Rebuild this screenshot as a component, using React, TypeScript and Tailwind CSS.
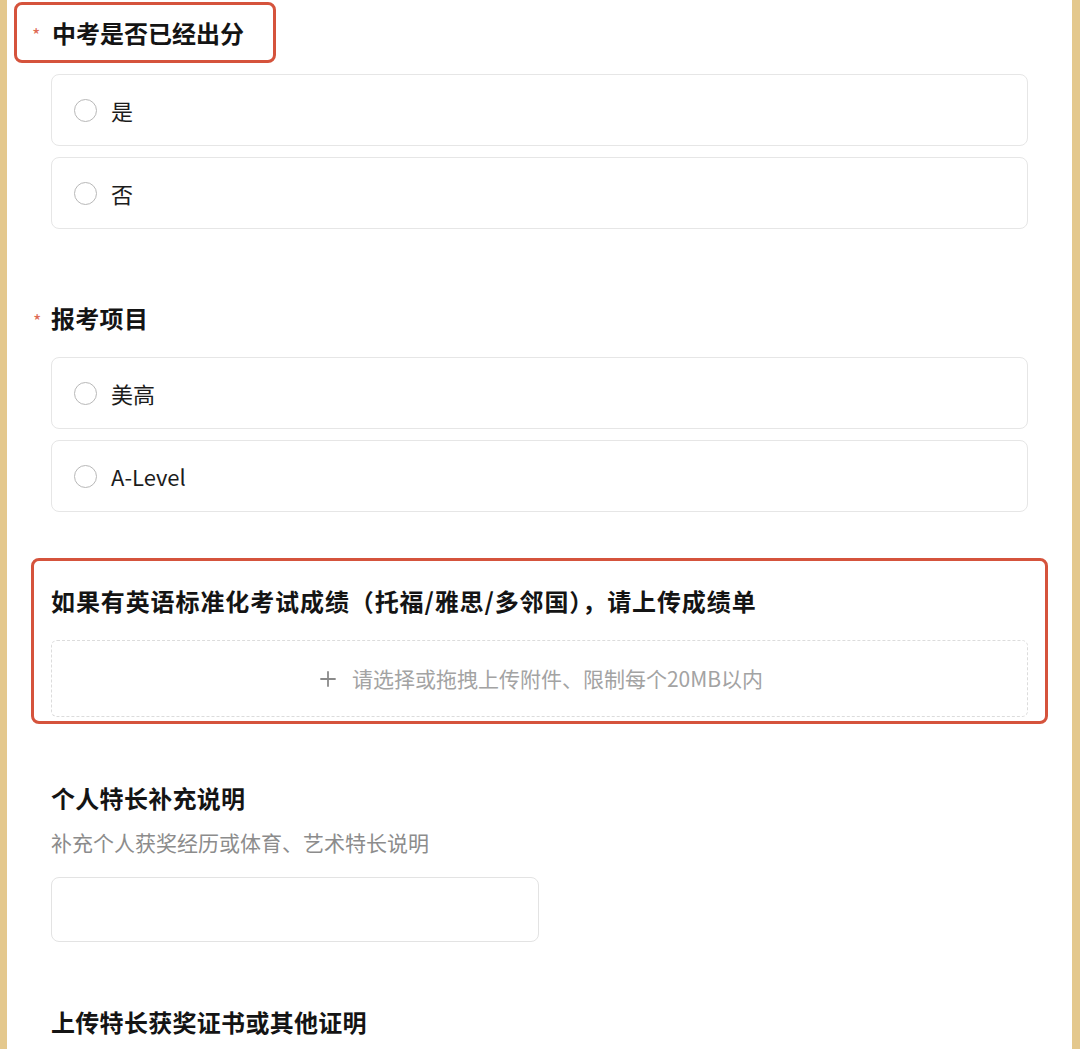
import { Plus } from "lucide-react";

const font = { fontFamily: '"Noto Sans CJK SC", "Noto Sans", sans-serif' };

function Option({ label }: { label: string }) {
  return (
    <div className="flex h-[72px] items-center rounded-[8px] border border-[#e6e6e6] bg-white pl-[22px]">
      <span className="h-[23px] w-[23px] rounded-full border-[1.5px] border-[#b8b8b8]" />
      <span className="ml-[14px] text-[22px] text-[#1c1c1c]">{label}</span>
    </div>
  );
}

function Title({ text, required }: { text: string; required?: boolean }) {
  return (
    <div className="-ml-[20px] flex h-[32px] items-center">
      <span className="w-[20px] pl-[2px] pt-[4px] text-[18px] text-[#de6b55]">
        {required ? "*" : ""}
      </span>
      <span className="text-[24px] font-bold leading-[32px] tracking-[0.3px] text-[#141414]">{text}</span>
    </div>
  );
}

export default function App() {
  return (
    <div
      style={font}
      className="h-[1049px] w-[1080px] overflow-hidden border-l-[7px] border-r-[8px] border-[#e4c88d] bg-white px-[44px]"
    >
      <div className="pt-[2px]">
        <div className="-ml-[37px] flex h-[61px] w-[262px] items-center rounded-[8px] border-[3px] border-[#d5533c] pl-[15px]">
          <span className="w-[20px] pt-[4px] text-[18px] text-[#de6b55]">*</span>
          <span className="text-[24px] font-bold leading-[32px] text-[#141414]">中考是否已经出分</span>
        </div>
      </div>

      <div className="mt-[11px] flex flex-col gap-[11px]">
        <Option label="是" />
        <Option label="否" />
      </div>

      <div className="mt-[73px]">
        <Title text="报考项目" required />
      </div>
      <div className="mt-[23px] flex flex-col gap-[11px]">
        <Option label="美高" />
        <Option label="A-Level" />
      </div>

      <div className="-mx-[20px] mt-[46px] rounded-[8px] border-[3px] border-[#d5533c] px-[17px] pb-[4px] pt-[24px]">
        <div className="text-[24px] font-bold leading-[32px] tracking-[0.9px] text-[#141414]">
          如果有英语标准化考试成绩（托福/雅思/多邻国），请上传成绩单
        </div>
        <div className="mt-[23px] flex h-[77px] items-center justify-center rounded-[6px] border border-dashed border-[#dcdcdc]">
          <Plus className="h-[24px] w-[24px] text-[#8a8a8a]" strokeWidth={1.8} />
          <span className="ml-[12px] text-[21px] text-[#a3a3a3]">请选择或拖拽上传附件、限制每个20MB以内</span>
        </div>
      </div>

      <div className="mt-[58px]">
        <Title text="个人特长补充说明" />
      </div>
      <div className="mt-[14px] text-[21px] leading-[28px] text-[#8c8c8c]">补充个人获奖经历或体育、艺术特长说明</div>
      <div className="mt-[21px] h-[65px] w-[488px] rounded-[8px] border border-[#e3e3e3]" />

      <div className="mt-[64px]">
        <Title text="上传特长获奖证书或其他证明" />
      </div>
    </div>
  );
}
